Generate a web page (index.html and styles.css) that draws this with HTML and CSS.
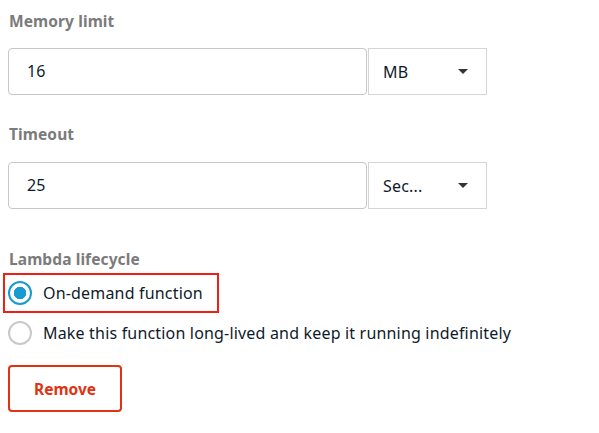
FILE: index.html
```html
<!DOCTYPE html>
<html>
<head>
<meta charset="utf-8">
<link rel="stylesheet" href="styles.css">
</head>
<body>
<div class="page">
  <div class="field">
    <div class="label">Memory limit</div>
    <div class="control">
      <div class="input">16</div>
      <div class="select"><span>MB</span><span class="caret"></span></div>
    </div>
  </div>
  <div class="field field-2">
    <div class="label">Timeout</div>
    <div class="control">
      <div class="input">25</div>
      <div class="select"><span>Sec...</span><span class="caret"></span></div>
    </div>
  </div>
  <div class="field field-3">
    <div class="label label-tight">Lambda lifecycle</div>
    <div class="radios">
      <div class="radio-row highlighted"><span class="radio checked"></span><span class="radio-text">On-demand function</span></div>
      <div class="radio-row"><span class="radio"></span><span class="radio-text">Make this function long-lived and keep it running indefinitely</span></div>
    </div>
  </div>
  <div class="actions"><button class="btn-remove">Remove</button></div>
</div>
</body>
</html>
```
FILE: styles.css
```css
* { box-sizing: border-box; }
html, body { margin: 0; padding: 0; background: #fff; }
body { font-family: "Noto Sans", "Open Sans", sans-serif; color: #0f1b2a; }
.page { padding: 11px 0 0 8px; width: 599px; }
.label { font-size: 15.5px; font-weight: 700; color: #7b7b7b; height: 20px; line-height: 20px; margin-bottom: 17px; padding-left: 1px; letter-spacing: 0.1px; }
.field-2 { margin-top: 29px; }
.field-2 .label { margin-bottom: 18px; }
.field-3 { margin-top: 40px; }
.label-tight { margin-bottom: 4px; }
.control { display: flex; gap: 1px; }
.input { width: 359px; height: 47px; border: 1px solid #c7c7c7; border-radius: 4px; padding-left: 18px; font-size: 16px; line-height: 45px; letter-spacing: 0.2px; }
.select { width: 119px; height: 47px; border: 1px solid #d5d5d5; display: flex; align-items: center; justify-content: space-between; padding: 0 18px 0 14px; font-size: 16px; letter-spacing: 0.2px; }
.caret { width: 0; height: 0; border-left: 5px solid transparent; border-right: 5px solid transparent; border-top: 5px solid #333; }
.radios { display: flex; flex-direction: column; }
.radio-row { display: flex; align-items: center; height: 40px; gap: 11px; font-size: 16px; letter-spacing: 0.18px; }
.radio-row.highlighted { margin-left: -5px; width: 216px; border: 2px solid #f01e14; padding-left: 3px; }
.radio { width: 24px; height: 24px; border-radius: 50%; border: 2px solid #c9c9c9; flex: none; }
.radio.checked { border: 2px solid #1a9bcf; background: radial-gradient(circle, #1a9bcf 0 6px, #fff 6.5px); }
.actions { margin-top: 12px; }
.btn-remove { width: 114px; height: 47px; border: 2px solid #df3312; border-radius: 4px; background: #fff; color: #df3312; font-family: "Noto Sans", "Open Sans", sans-serif; font-size: 15.5px; font-weight: 700; cursor: pointer; }
```
